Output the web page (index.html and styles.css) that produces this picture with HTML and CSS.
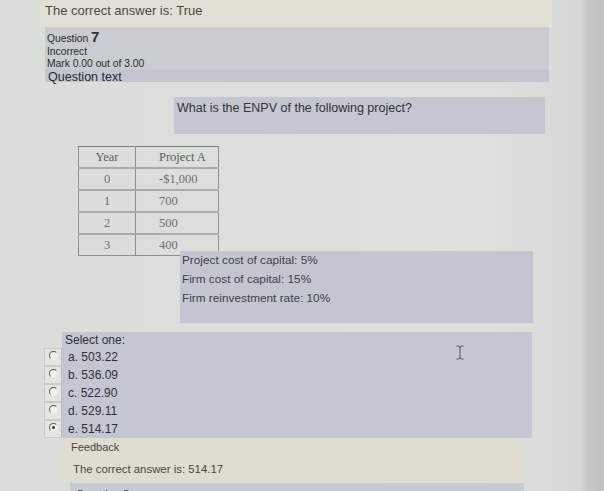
FILE: index.html
```html
<!DOCTYPE html>
<html>
<head>
<meta charset="utf-8">
<link rel="stylesheet" href="styles.css">
</head>
<body>
<div class="screen">
  <div class="outcome">The correct answer is: True</div>
  <div class="info">
    <div class="qno">Question <span class="num">7</span></div>
    <div class="state">Incorrect</div>
    <div class="grade">Mark 0.00 out of 3.00</div>
    <div class="qlabel">Question text</div>
  </div>
  <div class="qtext">What is the ENPV of the following project?</div>
  <table class="cf">
    <tr><td class="yr">Year</td><td class="val">Project A</td></tr>
    <tr><td class="yr">0</td><td class="val">-$1,000</td></tr>
    <tr><td class="yr">1</td><td class="val">700</td></tr>
    <tr><td class="yr">2</td><td class="val">500</td></tr>
    <tr><td class="yr">3</td><td class="val">400</td></tr>
  </table>
  <div class="facts">
    <p>Project cost of capital: 5%</p>
    <p>Firm cost of capital: 15%</p>
    <p>Firm reinvestment rate: 10%</p>
  </div>
  <div class="answer">
    <div class="prompt">Select one:</div>
    <div class="opt"><span class="rcell"><span class="radio"></span></span><span class="lbl">a. 503.22</span></div>
    <div class="opt"><span class="rcell"><span class="radio"></span></span><span class="lbl">b. 536.09</span></div>
    <div class="opt"><span class="rcell"><span class="radio"></span></span><span class="lbl">c. 522.90</span></div>
    <div class="opt"><span class="rcell"><span class="radio"></span></span><span class="lbl">d. 529.11</span></div>
    <div class="opt"><span class="rcell"><span class="radio checked"></span></span><span class="lbl">e. 514.17</span></div>
  </div>
  <div class="feedback">
    <div class="fbhead">Feedback</div>
    <div class="fbtext">The correct answer is: 514.17</div>
  </div>
  <div class="next">Question 8</div>
  <svg class="ibeam" width="10" height="15" viewBox="0 0 10 15"><path d="M1.5 1 H4 M6 1 H8.5 M4 1 Q5 1.5 5 3 V12 Q5 13.5 4 14 M6 1 Q5 1.5 5 3 M5 12 Q5 13.5 6 14 M1.5 14 H4 M6 14 H8.5" stroke="#555" stroke-width="1" fill="none"/></svg>
</div>
</body>
</html>
```
FILE: styles.css
```css
html, body {
  margin: 0;
  padding: 0;
}
body {
  width: 604px;
  height: 491px;
  overflow: hidden;
  background: linear-gradient(to right, #dadedb 0, #dde0dd 80%, #d6d9d7 96%, #c4c7c6 97.5%, #bfc2c1 100%);
  font-family: "Liberation Sans", Arial, sans-serif;
  color: #333;
}
.screen {
  position: relative;
  width: 604px;
  height: 491px;
}
.outcome {
  margin-left: 40px;
  width: 507px;
  height: 27px;
  padding-left: 5px;
  background: #e2dfd5;
  font-size: 13px;
  line-height: 22px;
  color: #4d4a45;
}
.info {
  margin-left: 45px;
  width: 504px;
  padding-top: 4px;
  background: #c9cdd1;
  color: #2a2a2a;
}
.qno, .state, .grade {
  padding-left: 2px;
  font-size: 10.3px;
}
.qno {
  height: 15px;
  line-height: 15px;
}
.num {
  font-size: 15px;
  line-height: 10px;
  font-weight: bold;
  color: #333;
}
.state {
  line-height: 12px;
}
.grade {
  line-height: 11px;
}
.qlabel {
  padding-left: 3px;
  height: 13px;
  line-height: 16px;
  font-size: 12.5px;
  background: #c3c6cf;
  color: #2a2a35;
}
.qtext {
  margin-top: 15px;
  margin-left: 174px;
  width: 368px;
  height: 33px;
  padding: 4px 0 0 3px;
  background: #c6c6d3;
  font-size: 12.5px;
  line-height: 15px;
  color: #333;
}
.cf {
  margin-top: 12px;
  margin-left: 78px;
  width: 141px;
  border-collapse: collapse;
  border: 1px solid #7d807e;
  font-family: "Liberation Serif", "Times New Roman", serif;
  font-size: 12.5px;
  color: #6e706f;
}
.cf td {
  height: 20px;
  padding: 0;
  border: 1px solid #8d908e;
  border-top: 2px solid #a9acaa;
}
.cf tr:first-child td {
  color: #5a5c5b;
  border-top: 1px solid #7d807e;
}
.cf .yr {
  width: 56px;
  text-align: center;
}
.cf .val {
  padding-left: 23px;
}
.facts {
  margin-top: -5px;
  margin-left: 180px;
  width: 351px;
  height: 72px;
  padding-left: 2px;
  background: #c5c5d1;
  font-size: 11.8px;
  color: #3f3f44;
}
.facts p {
  margin: 0;
  line-height: 19px;
}
.answer {
  margin-top: 9px;
  margin-left: 44px;
  width: 488px;
  font-size: 12px;
  color: #2f2f38;
}
.prompt {
  margin-left: 18px;
  height: 16px;
  padding-left: 3px;
  line-height: 17px;
  background: #c6c6d3;
}
.opt {
  display: flex;
  height: 18px;
}
.rcell {
  border: 1px solid #c9ccca;
  border-right-color: #b9bcbb;
  background: #e2e5e2;
  display: flex;
  align-items: flex-start;
  justify-content: center;
  padding-top: 2px;
  box-sizing: border-box;
  width: 18px;
}
.radio {
  width: 7px;
  height: 7px;
  border-radius: 50%;
  border: 1px solid #e9ebea;
  border-top-color: #555;
  border-left-color: #666;
  background: #f0f1f0;
  position: relative;
}
.radio.checked::after {
  content: "";
  position: absolute;
  left: 2px;
  top: 2px;
  width: 3px;
  height: 3px;
  border-radius: 50%;
  background: #333;
}
.lbl {
  flex: 1;
  padding-left: 6px;
  line-height: 19px;
  background: #c6c6d3;
}
.feedback {
  margin-left: 62px;
  width: 460px;
  height: 43px;
  background: #dfdcd0;
  font-size: 11px;
  color: #4a4740;
}
.fbhead {
  padding-left: 9px;
  line-height: 18px;
}
.fbtext {
  margin-top: 5px;
  padding-left: 11px;
  line-height: 16px;
  font-size: 11.4px;
}
.next {
  margin-top: 2px;
  margin-left: 70px;
  width: 448px;
  height: 20px;
  padding-left: 6px;
  background: #c5cbd0;
  font-size: 11px;
  line-height: 22px;
  color: #333;
}
.ibeam {
  position: absolute;
  left: 455px;
  top: 345px;
}
```
